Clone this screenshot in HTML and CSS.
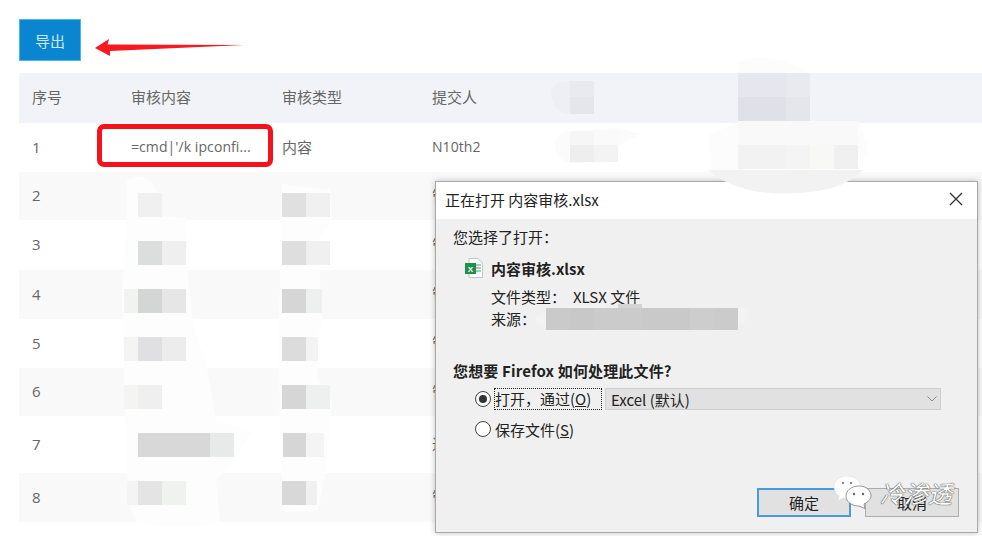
FILE: index.html
```html
<!DOCTYPE html>
<html lang="zh-CN">
<head>
<meta charset="utf-8">
<title>内容审核</title>
<link rel="stylesheet" href="styles.css">
</head>
<body>
<div class="page">
  <div class="toolbar">
    <button class="export">导出</button>
    <svg class="arrow" width="150" height="20" viewBox="0 0 150 20"><path d="M0 9 L14 0 L12.500 5.500 L149 6 L15 12 L15 17 Z" fill="#f8181f"/></svg>
  </div>
  <table class="grid">
    <thead><tr><th class="c-no">序号</th><th class="c-text">审核内容</th><th class="c-type">审核类型</th><th>提交人</th></tr></thead>
    <tbody>
      <tr class="r49"><td>1</td><td class="latin">=cmd|'/k ipconfi...</td><td>内容</td><td class="latin">N10th2</td></tr>
      <tr class="r48"><td>2</td><td></td><td></td><td>管理员</td></tr>
      <tr class="r50"><td>3</td><td></td><td></td><td>管理员</td></tr>
      <tr class="r49"><td>4</td><td></td><td></td><td>管理员</td></tr>
      <tr class="r49"><td>5</td><td></td><td></td><td>管理员</td></tr>
      <tr class="r48"><td>6</td><td></td><td></td><td>管理员</td></tr>
      <tr class="r57"><td>7</td><td></td><td></td><td>进行</td></tr>
      <tr class="r49"><td>8</td><td></td><td></td><td>管理员</td></tr>
    </tbody>
  </table>

  <svg class="mask" width="982" height="536" viewBox="0 0 982 536">
    <path d="M127 180 Q140 172 152 182 L162 200 L162 216 L186 218 L188 280 L194 330 L206 362 L216 420 L252 432 L234 460 L216 480 L220 522 Q190 532 136 522 L128 500 L126 440 L124 380 L122 290 L127 220 Z" fill="#fdfdfd"/>
    <path d="M282 184 L330 190 L332 218 L318 240 L322 320 L316 345 L318 380 L332 400 L326 470 L318 510 L284 512 L280 450 L279 320 L281 240 Z" fill="#fdfdfd"/>
    <path d="M551 92 Q552 82 570 81 L594 81 L594 114 L570 114 Q552 112 551 92 Z" fill="#eeeff5"/>
    <path d="M555 145 Q556 132 570 131 L618 128 L640 134 L618 146 L618 162 L572 163 Q556 160 555 145 Z" fill="#fbfbfb"/>
    <path d="M738 62 Q765 52 790 64 L810 73 L810 122 L860 122 L868 150 L858 172 L712 172 L708 135 L738 122 Z" fill="#fcfcfc"/>
    <g class="tiles">
      <rect x="738" y="73" width="48" height="24" fill="#e6e7ee"/><rect x="786" y="73" width="24" height="24" fill="#e9eaf0"/>
      <rect x="738" y="97" width="48" height="24" fill="#e0e1e8"/><rect x="786" y="97" width="24" height="24" fill="#e5e6ec"/>
      <rect x="570" y="81" width="24" height="16" fill="#e9eaf0"/><rect x="570" y="97" width="24" height="17" fill="#e5e6ec"/>
      <rect x="570" y="131" width="24" height="14" fill="#f6f6f6"/><rect x="594" y="131" width="24" height="14" fill="#fafafa"/>
      <rect x="570" y="145" width="24" height="17" fill="#eeeeee"/><rect x="594" y="145" width="24" height="17" fill="#f3f3f3"/>
      <rect x="738" y="121" width="120" height="24" fill="#f8f9f8"/>
      <rect x="738" y="145" width="48" height="24" fill="#f2f2f2"/><rect x="786" y="145" width="24" height="24" fill="#f4f4f4"/><rect x="810" y="145" width="24" height="24" fill="#f8f8f5"/><rect x="834" y="145" width="24" height="24" fill="#f0f0f0"/>

      <rect x="138" y="193" width="24" height="24" fill="#f0f0f0"/><rect x="282" y="193" width="24" height="24" fill="#e0e0e0"/><rect x="306" y="193" width="24" height="24" fill="#f0f0f0"/>
      <rect x="138" y="241" width="24" height="24" fill="#dcdedd"/><rect x="162" y="241" width="24" height="24" fill="#efefef"/><rect x="282" y="241" width="24" height="24" fill="#dedede"/><rect x="306" y="241" width="24" height="24" fill="#f0f0f0"/>
      <rect x="124" y="289" width="14" height="24" fill="#f2f2f0"/><rect x="138" y="289" width="24" height="24" fill="#d4d6d6"/><rect x="162" y="289" width="24" height="24" fill="#e6e6e6"/><rect x="282" y="289" width="24" height="24" fill="#d6d6d6"/><rect x="306" y="289" width="16" height="24" fill="#eef0f0"/>
      <rect x="124" y="337" width="14" height="24" fill="#f4f4f2"/><rect x="138" y="337" width="24" height="24" fill="#e0e0e2"/><rect x="162" y="337" width="24" height="24" fill="#ececec"/><rect x="282" y="337" width="24" height="24" fill="#dcdcdc"/><rect x="306" y="337" width="12" height="24" fill="#f3f3f3"/>
      <rect x="124" y="385" width="14" height="24" fill="#f4f4f2"/><rect x="138" y="385" width="24" height="24" fill="#efefef"/><rect x="282" y="385" width="24" height="24" fill="#d6d6d6"/><rect x="306" y="385" width="24" height="24" fill="#eef0f0"/>
      <rect x="138" y="433" width="72" height="24" fill="#d8d8d8"/><rect x="210" y="433" width="24" height="24" fill="#e8e9e9"/><rect x="283" y="433" width="23" height="24" fill="#d6d6d6"/><rect x="306" y="433" width="18" height="24" fill="#f4f4f4"/>
      <rect x="127" y="481" width="11" height="24" fill="#f4f4f4"/><rect x="138" y="481" width="24" height="24" fill="#e4e4e4"/><rect x="162" y="481" width="24" height="24" fill="#f0f2f0"/><rect x="282" y="481" width="24" height="24" fill="#d8d8d8"/><rect x="306" y="481" width="11" height="24" fill="#f0f0f0"/>
    </g>
  </svg>

  <div class="highlight"></div>

  <div class="dialog">
    <div class="titlebar">
      <span>正在打开 内容审核.xlsx</span>
      <svg class="close" width="14" height="14" viewBox="0 0 14 14"><path d="M1 1 L13 13 M13 1 L1 13" stroke="#333" stroke-width="1.300" fill="none"/></svg>
    </div>
    <div class="dialog-body">
      <div class="chosen">您选择了打开：</div>
      <div class="file">
        <svg class="xls" width="18" height="20" viewBox="0 0 18 20">
          <path d="M4 .5 H13 L17.500 5 V19.500 H4 Z" fill="#fff" stroke="#c4c4c4"/>
          <path d="M11 7 H16 M11 10 H16 M11 13 H16" stroke="#7fbf9a" stroke-width="1.500"/>
          <rect x="0" y="5" width="11" height="11" fill="#1f8f4e"/>
          <text x="5.500" y="13.500" class="xls-x">X</text>
        </svg>
        <span class="file-name">内容审核.xlsx</span>
      </div>
      <div class="meta"><span class="meta-key">文件类型：</span><span>XLSX 文件</span></div>
      <div class="meta meta-src"><span class="meta-key">来源：</span>
        <svg class="src-mask" width="220" height="26" viewBox="0 0 220 26">
          <path d="M0 15 Q4 6 20 6 L34 2 L70 0 L70 4 L200 4 Q214 4 212 14 Q206 24 190 24 L10 24 Q0 22 0 15 Z" fill="#f3f3f3"/>
          <rect x="10" y="4" width="24" height="24" fill="#cacaca"/><rect x="34" y="4" width="24" height="24" fill="#c8c8c8"/><rect x="58" y="4" width="48" height="24" fill="#cbcbcb"/><rect x="82" y="0" width="24" height="4" fill="#d4d4d4"/><rect x="106" y="4" width="48" height="24" fill="#c9c9c9"/><rect x="154" y="4" width="24" height="24" fill="#cdcdcd"/><rect x="178" y="4" width="24" height="24" fill="#cbcbcb"/>
        </svg>
      </div>
      <div class="question">您想要 Firefox 如何处理此文件?</div>
      <div class="option">
        <span class="radio radio-on"></span>
        <span class="focus-label">打开，通过(<u>O</u>)</span>
        <div class="select"><span>Excel (默认)</span>
          <svg width="10" height="6" viewBox="0 0 10 6"><path d="M.5 .5 L5 5 L9.500 .5" stroke="#888" fill="none"/></svg>
        </div>
      </div>
      <div class="option option-save">
        <span class="radio"></span>
        <span class="plain-label">保存文件(<u>S</u>)</span>
      </div>
      <div class="actions">
        <button class="btn btn-primary">确定</button>
        <button class="btn">取消</button>
      </div>
    </div>
  </div>

  <svg class="smear" width="160" height="24" viewBox="0 0 160 24"><path d="M0 0 H155 Q140 16 110 21 Q75 26 45 21 Q15 14 0 0 Z" fill="#f2f2f2"/></svg>

  <div class="watermark">
    <svg width="40" height="34" viewBox="0 0 40 34">
      <path d="M14 1 C6 1 1 6 1 12 C1 16 3 19 6 21 L5 26 L10 23 C12 24 14 24 16 24 C24 24 28 18 28 12 C28 6 22 1 14 1 Z" fill="#fff" stroke="#ddd" stroke-width=".6"/>
      <path d="M26 11 C18 11 13 16 13 21 C13 27 19 31 26 31 L32 33.500 L31 29 C35 27 38 24 38 21 C38 16 34 11 26 11 Z" fill="#fff" stroke="#555" stroke-width=".6"/>
      <circle cx="10" cy="8" r="1.200" fill="#888"/><circle cx="18" cy="8" r="1.200" fill="#888"/>
      <circle cx="21" cy="19" r="1.200" fill="#666"/><circle cx="30" cy="19" r="1.200" fill="#666"/>
    </svg>
    <span class="wm-text">冷渗透</span>
  </div>
</div>
</body>
</html>
```
FILE: styles.css
```css
html, body { margin: 0; padding: 0; background: #fff; }
body { font-family: "Open Sans", "Noto Sans CJK SC", sans-serif; font-size: 15px; color: #666; overflow: hidden; }
.page { position: relative; width: 982px; height: 536px; overflow: hidden; padding: 19px 0 0 19px; box-sizing: border-box; }

.toolbar { display: flex; align-items: flex-start; height: 54px; }
.export { width: 62px; height: 42px; border: 1px solid #55aee6; background: #0a86d0; color: #cfe8f8; font: 15px "Noto Sans CJK SC", sans-serif; padding: 0; }
.arrow { margin: 20px 0 0 14px; }

.grid { border-collapse: collapse; table-layout: fixed; width: 963px; }
.grid th, .grid td { padding: 0 0 2px 13px; box-sizing: border-box; text-align: left; font-weight: 400; color: #666; white-space: nowrap; overflow: hidden; }
.grid th { padding-bottom: 3px; }
.grid thead tr { background: #f2f3f8; height: 50px; }
.grid td.latin { font-size: 14px; letter-spacing: .08px; }
.c-no { width: 99px; }
.c-text { width: 151px; }
.c-type { width: 150px; }
.grid tbody tr:nth-child(even) { background: #f9f9f9; }
.r48 { height: 48px; }
.r49 { height: 49px; }
.r50 { height: 50px; }
.r57 { height: 57px; }

.mask { position: absolute; left: 0; top: 0; }
.highlight { position: absolute; left: 97px; top: 124px; width: 176px; height: 43px; box-sizing: border-box; border: 5px solid #f5121c; border-radius: 7px; }

.dialog { position: absolute; left: 435px; top: 181px; width: 543px; height: 352px; box-sizing: border-box; border: 1px solid #a9a9a9; background: #f0f0f0; box-shadow: 0 0 6px rgba(0,0,0,.25); color: #222; display: flex; flex-direction: column; font-family: "Noto Sans CJK SC", sans-serif; }
.titlebar { height: 37px; flex: none; background: #fff; display: flex; align-items: center; justify-content: space-between; padding: 0 14px 3px 9px; box-sizing: border-box; font-size: 15px; }
.dialog-body { flex: 1; display: flex; flex-direction: column; padding: 7px 18px 15px 17px; font-size: 15px; }
.chosen { line-height: 22px; }
.file { display: flex; align-items: center; gap: 8px; margin: 9px 0 0 12px; height: 22px; font-weight: 700; }
.xls { flex: none; }
.xls-x { font: 700 8px "Liberation Sans", sans-serif; fill: #fff; text-anchor: middle; }
.meta { display: flex; margin-left: 38px; line-height: 22px; }
.file + .meta { margin-top: 7px; }
.meta-key { width: 82px; }
.meta-src { position: relative; }
.meta-src .meta-key { width: 45px; }
.src-mask { position: absolute; left: 45px; top: -4px; }
.question { font-weight: 700; margin-top: 30px; line-height: 22px; letter-spacing: .15px; }
.option { display: flex; align-items: center; margin: 6px 0 0 22px; height: 22px; }
.option-save { margin-top: 8px; }
.radio { width: 14px; height: 14px; border: 1px solid #444; border-radius: 50%; background: #fff; flex: none; display: flex; align-items: center; justify-content: center; margin-right: 4px; }
.radio-on::after { content: ""; width: 8px; height: 8px; border-radius: 50%; background: #333; }
.focus-label { outline: 1px dotted #222; line-height: 20px; white-space: nowrap; width: 106px; flex: none; }
.plain-label { white-space: nowrap; }
.select { margin-left: 4px; width: 336px; height: 22px; box-sizing: border-box; background: #e1e1e1; border: 1px solid #cfcfcf; display: flex; align-items: center; justify-content: space-between; padding: 0 3px 0 5px; }
.actions { margin-top: auto; display: flex; justify-content: flex-end; gap: 14px; }
.btn { width: 94px; height: 29px; box-sizing: border-box; background: #e1e1e1; border: 1px solid #adadad; font: 15px "Noto Sans CJK SC", sans-serif; color: #222; padding: 0; }
.btn-primary { border: 2px solid #4a9ad8; }

.smear { position: absolute; left: 708px; top: 170px; }
.watermark { position: absolute; left: 833px; top: 475px; display: flex; align-items: flex-start; gap: 7px; }
.wm-text { color: #fff; font: italic 24px/30px "Noto Sans CJK SC", sans-serif; text-shadow: 0 0 1px #333, 0 0 1px #333; white-space: nowrap; margin-top: 3px; }
```
